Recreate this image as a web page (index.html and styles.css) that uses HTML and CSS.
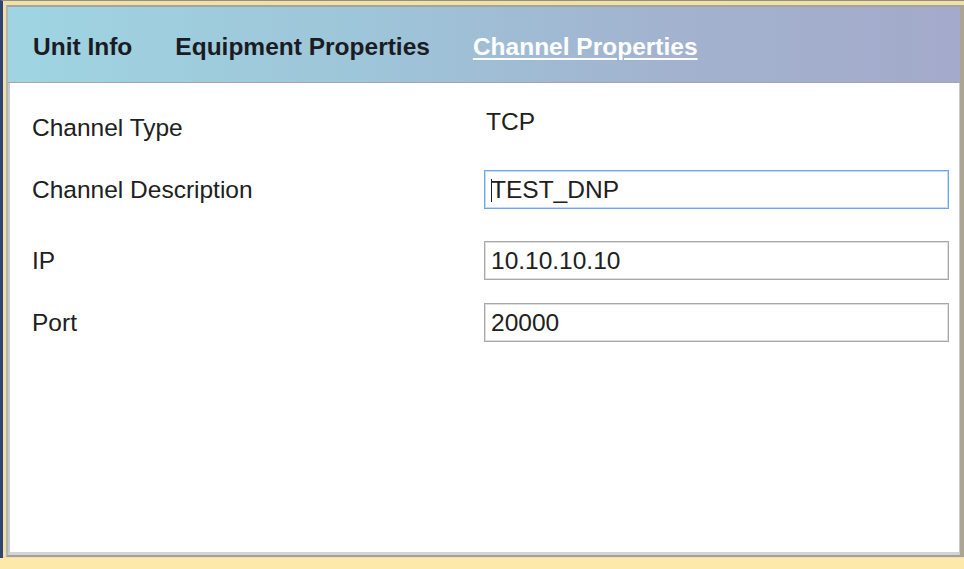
FILE: index.html
```html
<!DOCTYPE html>
<html>
<head>
<meta charset="utf-8">
<link rel="stylesheet" href="styles.css">
</head>
<body>
<div class="shell">
  <div class="dialog">
    <div class="tabs">
      <span class="tab">Unit Info</span>
      <span class="tab">Equipment Properties</span>
      <span class="tab active">Channel Properties</span>
    </div>
    <div class="panel">
      <div class="row row-type">
        <div class="label label-type">Channel Type</div>
        <div class="value">TCP</div>
      </div>
      <div class="row row-desc">
        <div class="label">Channel Description</div>
        <div class="field focused"><span class="caret"></span>TEST_DNP</div>
      </div>
      <div class="row row-ip">
        <div class="label">IP</div>
        <div class="field">10.10.10.10</div>
      </div>
      <div class="row row-port">
        <div class="label">Port</div>
        <div class="field">20000</div>
      </div>
    </div>
  </div>
</div>
</body>
</html>
```
FILE: styles.css
```css
html, body {
  margin: 0;
  padding: 0;
}
body {
  width: 964px;
  height: 569px;
  overflow: hidden;
  background: #fde9aa;
  font-family: "Liberation Sans", Arial, sans-serif;
}
.shell {
  box-sizing: border-box;
  width: 964px;
  height: 558px;
  border-top: 1px solid #8f8f8f;
  border-left: 3px solid #2f4475;
  padding: 4px 0 0 3px;
  background: #f1e2a4;
}
.dialog {
  border-top: 2px solid #a3a3a3;
  border-left: 2px solid #b4b4b4;
  border-right: 4px solid #aaa692;
  border-bottom: 2px solid #a0a0a0;
  background: #ffffff;
}
.tabs {
  height: 76px;
  box-sizing: border-box;
  padding: 26px 0 0 25px;
  border-bottom: 1px solid #a6a6a6;
  background: linear-gradient(to right, #9fd5e2 0%, #9ec4d8 40%, #a2b2cf 70%, #a4aacb 100%);
  display: flex;
  gap: 43px;
}
.tab {
  font-size: 24.5px;
  line-height: 28px;
  font-weight: bold;
  color: #1b1b24;
}
.tab.active {
  color: #ffffff;
  text-decoration: underline;
  text-decoration-thickness: 2px;
  text-underline-offset: 3px;
}
.panel {
  height: 469px;
  box-sizing: content-box;
  border-left: 2px solid #c8c8c8;
  border-right: 1px solid #cacaca;
  border-bottom: 3px solid #d4d4d4;
  padding: 25px 0 0 22px;
  box-sizing: border-box;
  height: 472px;
}
.row {
  display: flex;
  align-items: center;
}
.row-type {
  align-items: flex-start;
}
.row-desc { margin-top: 28px; }
.row-ip { margin-top: 32px; }
.row-port { margin-top: 23px; }
.label {
  width: 452px;
  flex: none;
  font-size: 24.5px;
  line-height: 28px;
  color: #202020;
}
.label-type {
  padding-top: 6px;
}
.value {
  padding-left: 2px;
  font-size: 24.5px;
  line-height: 28px;
  color: #202020;
}
.field {
  box-sizing: border-box;
  width: 465px;
  height: 39px;
  border: 1px solid #a8a8a8;
  box-shadow: inset 0 0 0 1px #dedede;
  padding-left: 6px;
  font-size: 24.5px;
  line-height: 37px;
  color: #202020;
  display: flex;
  align-items: center;
}
.field.focused {
  border-color: #6fa6e8;
  box-shadow: inset 0 0 0 1px #c2dbf7;
}
.caret {
  display: inline-block;
  width: 1px;
  height: 23px;
  margin-right: -1px;
  margin-top: 2px;
  background: #202020;
}
```
